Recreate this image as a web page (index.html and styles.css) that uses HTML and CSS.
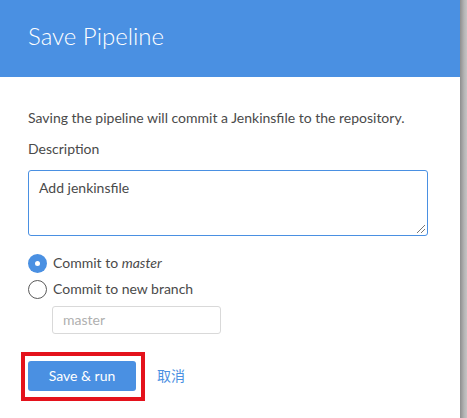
FILE: index.html
```html
<!DOCTYPE html>
<html>
<head>
<meta charset="utf-8">
<link rel="stylesheet" href="styles.css">
</head>
<body>
<div class="page">
  <div class="dialog">
    <div class="header"><h1 class="title">Save Pipeline</h1></div>
    <div class="content">
      <p class="intro">Saving the pipeline will commit a Jenkinsfile to the repository.</p>
      <div class="label">Description</div>
      <div class="textarea">Add jenkinsfile<span class="grip"></span></div>
      <div class="radios">
        <div class="radio-row"><span class="radio checked"></span><span class="radio-label">Commit to <em>master</em></span></div>
        <div class="radio-row"><span class="radio"></span><span class="radio-label">Commit to new branch</span></div>
        <div class="branch-input">master</div>
      </div>
      <div class="actions">
        <div class="btn-wrap">
          <div class="btn">Save &amp; run</div>
          <div class="highlight"></div>
        </div>
        <a class="cancel">取消</a>
      </div>
    </div>
  </div>
  <div class="edge"></div>
</div>
</body>
</html>
```
FILE: styles.css
```css
html, body {
  margin: 0;
  padding: 0;
  background: #fff;
}
.page {
  display: flex;
  width: 467px;
  height: 418px;
  overflow: hidden;
}
.dialog {
  width: 460px;
  flex: none;
  font-family: Lato, "Noto Sans CJK SC", sans-serif;
  color: #4a4a4a;
  font-size: 14px;
  line-height: 20px;
}
.edge {
  width: 7px;
  flex: none;
  background: linear-gradient(to right, #8e8e8e, #b5b5b5 60%, #c4c4c4);
}
.header {
  height: 77px;
  box-sizing: border-box;
  background: #4a90e2;
  padding: 21px 28px 0;
}
.title {
  margin: 0;
  font-family: Lato, sans-serif;
  font-weight: 300;
  font-size: 24px;
  line-height: 29px;
  color: #fff;
}
.content {
  padding: 31px 32px 0 28px;
}
.intro {
  margin: 0;
}
.label {
  margin-top: 11px;
}
.textarea {
  position: relative;
  margin-top: 11px;
  height: 66px;
  box-sizing: border-box;
  border: 1px solid #4a90e2;
  border-radius: 3px;
  padding: 7px 10px;
  color: #4a4a4a;
}
.grip {
  position: absolute;
  right: 2px;
  bottom: 2px;
  width: 8px;
  height: 8px;
  background: linear-gradient(135deg, transparent 45%, #777 45%, #777 53%, transparent 53%, transparent 70%, #777 70%, #777 78%, transparent 78%);
}
.radios {
  margin-top: 17px;
  display: flex;
  flex-direction: column;
}
.radio-row {
  display: flex;
  align-items: center;
  height: 20px;
  gap: 6px;
  margin-bottom: 6px;
}
.radio {
  width: 19px;
  height: 19px;
  box-sizing: border-box;
  border-radius: 50%;
  border: 1px solid #5a5a5a;
  background: #fff;
  flex: none;
  position: relative;
}
.radio.checked {
  border: none;
  background: #4a90e2;
}
.radio.checked::after {
  content: "";
  position: absolute;
  left: 7px;
  top: 7px;
  width: 5px;
  height: 5px;
  border-radius: 50%;
  background: #fff;
}
.radio-label em {
  font-style: italic;
}
.branch-input {
  margin: 1px 0 0 24px;
  width: 169px;
  height: 28px;
  box-sizing: border-box;
  border: 1px solid #d9d9d9;
  border-radius: 3px;
  padding: 3px 10px;
  color: #b0b0b0;
}
.actions {
  margin-top: 27px;
  display: flex;
  align-items: center;
  gap: 21px;
}
.btn-wrap {
  position: relative;
}
.btn {
  width: 108px;
  height: 30px;
  box-sizing: border-box;
  background: #4a90e2;
  border-radius: 3px;
  color: #fff;
  text-align: center;
  line-height: 30px;
}
.highlight {
  position: absolute;
  left: -7px;
  top: -9px;
  width: 124px;
  height: 49px;
  box-sizing: border-box;
  border: 4px solid #e4121c;
}
.cancel {
  color: #4a90e2;
  cursor: pointer;
}
```
